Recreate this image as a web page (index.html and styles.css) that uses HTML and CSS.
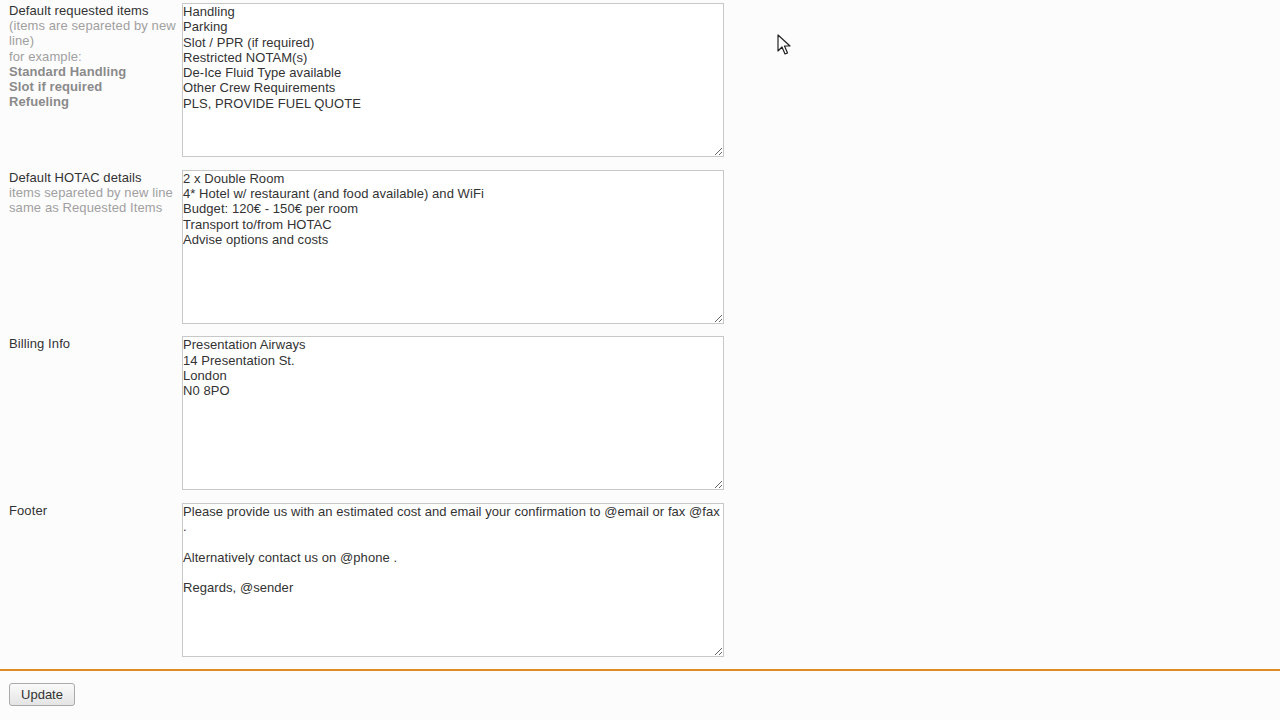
FILE: index.html
```html
<!DOCTYPE html>
<html>
<head>
<meta charset="utf-8">
<link rel="stylesheet" href="styles.css">
</head>
<body>
<form class="settings">
  <div class="rows">
    <div class="row">
      <div class="label">
        <div class="title">Default requested items</div>
        <div class="hint">(items are separeted by new line)</div>
        <div class="hint">for example:</div>
        <div class="example">Standard Handling</div>
        <div class="example">Slot if required</div>
        <div class="example">Refueling</div>
      </div>
      <textarea class="field">Handling
Parking
Slot / PPR (if required)
Restricted NOTAM(s)
De-Ice Fluid Type available
Other Crew Requirements
PLS, PROVIDE FUEL QUOTE</textarea>
    </div>
    <div class="row">
      <div class="label">
        <div class="title">Default HOTAC details</div>
        <div class="hint">items separeted by new line</div>
        <div class="hint">same as Requested Items</div>
      </div>
      <textarea class="field">2 x Double Room
4* Hotel w/ restaurant (and food available) and WiFi
Budget: 120€ - 150€ per room
Transport to/from HOTAC
Advise options and costs</textarea>
    </div>
    <div class="row">
      <div class="label">
        <div class="title">Billing Info</div>
      </div>
      <textarea class="field">Presentation Airways
14 Presentation St.
London
N0 8PO</textarea>
    </div>
    <div class="row">
      <div class="label">
        <div class="title">Footer</div>
      </div>
      <textarea class="field">Please provide us with an estimated cost and email your confirmation to @email or fax @fax .

Alternatively contact us on @phone .

Regards, @sender</textarea>
    </div>
  </div>
  <div class="actions">
    <button type="button" class="btn">Update</button>
  </div>
</form>
<svg class="cursor" width="16" height="22" viewBox="0 0 16 22">
  <path d="M1 1 L1 17 L5 13 L8 20 L10.5 19 L7.5 12 L13 12 Z" fill="#fff" stroke="#222" stroke-width="1.2" stroke-linejoin="round"/>
</svg>
</body>
</html>
```

FILE: styles.css
```css
html, body {
  margin: 0;
  padding: 0;
  background: #fdfcfd;
  font-family: "Liberation Sans", Arial, sans-serif;
  font-size: 13px;
  color: #333;
}

.settings {
  display: flex;
  flex-direction: column;
}

.rows {
  display: flex;
  flex-direction: column;
  gap: 12.67px;
  padding: 3px 0 0 9px;
}

.row {
  display: flex;
  align-items: flex-start;
}

.label {
  width: 173px;
  flex: none;
  line-height: 15.2px;
  padding-top: 0;
  padding-right: 6px;
  box-sizing: border-box;
  letter-spacing: 0.1px;
}

.title {
  color: #333;
}

.hint {
  color: #a0a0a0;
}

.example {
  color: #8a8a8a;
  font-weight: bold;
}

.field {
  display: block;
  width: 542px;
  height: 154px;
  box-sizing: border-box;
  margin: 0;
  padding: 0;
  border: 1px solid #c8c8c8;
  background: #fff;
  font-family: "Liberation Sans", Arial, sans-serif;
  font-size: 13px;
  line-height: 15.3px;
  letter-spacing: 0.06px;
  color: #333;
  overflow: hidden;
}

.actions {
  margin-top: 12px;
  border-top: 2px solid #e08c24;
  padding: 12px 0 0 9px;
}

.btn {
  width: 66px;
  height: 23px;
  font-family: "Liberation Sans", Arial, sans-serif;
  font-size: 13px;
  color: #333;
  background: linear-gradient(#fafafa, #e4e4e4);
  border: 1px solid #aaa;
  border-radius: 3px;
  padding: 0;
}

.cursor {
  position: absolute;
  left: 777px;
  top: 34px;
}
```
